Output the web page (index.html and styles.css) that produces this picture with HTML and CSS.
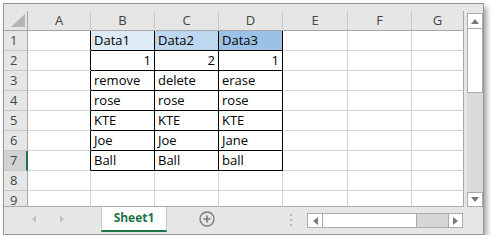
FILE: index.html
```html
<!DOCTYPE html>
<html lang="en">
<head>
    <meta charset="UTF-8">
    <title>Sheet1</title>
    <link rel="stylesheet" href="styles.css">
</head>
<body>
    <div class="window">
        <div class="sheet-area">
            <div class="grid">
                <div class="h corner">
                    <svg width="14" height="13" viewBox="0 0 14 13"><polygon points="14,0 14,13 0,13" fill="#b5b5b5"/></svg>
                </div>
                <div class="h col">A</div><div class="h col">B</div><div class="h col">C</div><div class="h col">D</div><div class="h col">E</div><div class="h col">F</div><div class="h col last">G</div>

                <div class="h row">1</div><div class="c edge"></div><div class="c t b1">Data1</div><div class="c t b2">Data2</div><div class="c t b3">Data3</div><div class="c"></div><div class="c"></div><div class="c last"></div>
                <div class="h row">2</div><div class="c edge"></div><div class="c t num">1</div><div class="c t num">2</div><div class="c t num">1</div><div class="c"></div><div class="c"></div><div class="c last"></div>
                <div class="h row">3</div><div class="c edge"></div><div class="c t">remove</div><div class="c t">delete</div><div class="c t">erase</div><div class="c"></div><div class="c"></div><div class="c last"></div>
                <div class="h row">4</div><div class="c edge"></div><div class="c t">rose</div><div class="c t">rose</div><div class="c t">rose</div><div class="c"></div><div class="c"></div><div class="c last"></div>
                <div class="h row">5</div><div class="c edge"></div><div class="c t">KTE</div><div class="c t">KTE</div><div class="c t">KTE</div><div class="c"></div><div class="c"></div><div class="c last"></div>
                <div class="h row">6</div><div class="c edge"></div><div class="c t">Joe</div><div class="c t">Joe</div><div class="c t">Jane</div><div class="c"></div><div class="c"></div><div class="c last"></div>
                <div class="h row active">7</div><div class="c edge"></div><div class="c t">Ball</div><div class="c t">Ball</div><div class="c t">ball</div><div class="c"></div><div class="c"></div><div class="c last"></div>
                <div class="h row">8</div><div class="c"></div><div class="c"></div><div class="c"></div><div class="c"></div><div class="c"></div><div class="c"></div><div class="c last"></div>
                <div class="h row">9</div><div class="c"></div><div class="c"></div><div class="c"></div><div class="c"></div><div class="c"></div><div class="c"></div><div class="c last"></div>
            </div>
            <div class="vscroll">
                <div class="sbtn up"><svg width="8" height="5" viewBox="0 0 8 5"><polygon points="0,5 8,5 4,0" fill="#7a7a7a"/></svg></div>
                <div class="vthumb"></div>
                <div class="vtrack"></div>
                <div class="sbtn down"><svg width="8" height="5" viewBox="0 0 8 5"><polygon points="0,0 8,0 4,5" fill="#7a7a7a"/></svg></div>
            </div>
        </div>
        <div class="tabbar">
            <div class="tab-nav">
                <svg width="97" height="25" viewBox="0 0 97 25">
                    <polygon points="28,12 32,8 32,16" fill="#c3c3c3"/>
                    <polygon points="56,8 60,12 56,16" fill="#c3c3c3"/>
                </svg>
            </div>
            <div class="sheet-tab">Sheet1</div>
            <svg class="add-sheet" width="16" height="16" viewBox="0 0 16 16">
                <circle cx="8" cy="8" r="7" fill="none" stroke="#7a7a7a" stroke-width="1.3"/>
                <path d="M4.5 8h7M8 4.5v7" stroke="#7a7a7a" stroke-width="1.5"/>
            </svg>
            <div class="split-dots"><span></span><span></span><span></span></div>
            <div class="hscroll">
                <div class="hbtn"><svg width="5" height="8" viewBox="0 0 5 8"><polygon points="5,0 5,8 0,4" fill="#7a7a7a"/></svg></div>
                <div class="hthumb"></div>
                <div class="htrack"></div>
                <div class="hbtn right"><svg width="5" height="8" viewBox="0 0 5 8"><polygon points="0,0 0,8 5,4" fill="#7a7a7a"/></svg></div>
            </div>
        </div>
    </div>
</body>
</html>
```

FILE: styles.css
```css
* {
    box-sizing: border-box;
}

body {
    margin: 0;
    background-color: #fff;
    font-family: "Open Sans", Arial, sans-serif;
}

.window {
    margin: 3px 0 0 3px;
    width: 481px;
    height: 232px;
    border: 1px solid #959595;
    background-color: #e6e6e6;
    box-shadow: 3px 4px 5px rgba(0, 0, 0, 0.35);
    display: flex;
    flex-direction: column;
}

.sheet-area {
    display: flex;
    padding-top: 7px;
    height: 203px;
}

.grid {
    display: grid;
    grid-template-columns: 24px 63px 64px 64px 64px 65px 64px 52px;
    grid-auto-rows: 20px;
    width: 460px;
    height: 196px;
    overflow: hidden;
    border-bottom: 1px solid #ababab;
}

/* headers */
.h {
    background-color: #e6e6e6;
    color: #444;
    font-size: 13px;
    line-height: 19px;
    border-right: 1px solid #c8c8c8;
    border-bottom: 1px solid #c8c8c8;
}

.col {
    text-align: center;
    border-bottom-color: #a6a6a6;
}

.col.last {
    border-right-color: #a6a6a6;
}

.corner {
    border-right-color: #a6a6a6;
    border-bottom-color: #a6a6a6;
    display: flex;
    align-items: flex-end;
    justify-content: flex-end;
    padding: 0 2px 3px 0;
}

.corner svg {
    display: block;
}

.row {
    padding-left: 6px;
    border-right-color: #a6a6a6;
}

.row.active {
    background-color: #d2d2d2;
    border-right: 2px solid #217346;
}

/* cells */
.c {
    background-color: #fff;
    color: #000;
    font-size: 13px;
    line-height: 19px;
    padding: 0 3px;
    white-space: nowrap;
    overflow: hidden;
    border-right: 1px solid #d4d4d4;
    border-bottom: 1px solid #d4d4d4;
}

.c.last {
    border-right-color: #a6a6a6;
}

.c.edge {
    border-right-color: #000;
}

.c.t {
    border-right-color: #000;
    border-bottom-color: #000;
}

.num {
    text-align: right;
}

.b1 { background-color: #ddebf7; }
.b2 { background-color: #bdd7ee; }
.b3 { background-color: #9bc2e6; }

/* vertical scrollbar */
.vscroll {
    margin-left: 3px;
    width: 16px;
    height: 196px;
    padding-top: 2px;
    display: flex;
    flex-direction: column;
}

.sbtn {
    background-color: #fff;
    border: 1px solid #ababab;
    display: flex;
    align-items: center;
    justify-content: center;
}

.sbtn.up {
    height: 16px;
}

.sbtn.down {
    height: 15px;
}

.vthumb {
    height: 64px;
    background-color: #fff;
    border: 1px solid #ababab;
    border-top: none;
}

.vtrack {
    flex: 1;
    background-color: #dadada;
}

/* sheet tabs */
.tabbar {
    display: flex;
    align-items: flex-start;
    height: 27px;
}

.tab-nav {
    width: 97px;
    height: 25px;
}

.tab-nav svg {
    display: block;
}

.sheet-tab {
    width: 66px;
    height: 25px;
    background-color: #fff;
    border-left: 1px solid #c6c6c6;
    border-right: 1px solid #c6c6c6;
    border-bottom: 2px solid #217346;
    color: #217346;
    font-size: 12px;
    font-weight: bold;
    line-height: 22px;
    text-align: center;
}

.add-sheet {
    display: block;
    margin: 4px 0 0 32px;
}

.split-dots {
    margin: 7px 0 0 75px;
    display: flex;
    flex-direction: column;
    gap: 3px;
}

.split-dots span {
    width: 2px;
    height: 2px;
    background-color: #b4b4b4;
}

.hscroll {
    margin: 6px 0 0 15px;
    width: 156px;
    height: 15px;
    display: flex;
    border: 1px solid #ababab;
    background-color: #d6d6d6;
}

.hbtn {
    width: 15px;
    background-color: #fff;
    border-right: 1px solid #ababab;
    display: flex;
    align-items: center;
    justify-content: center;
}

.hbtn.right {
    width: 14px;
    border-right: none;
    border-left: 1px solid #ababab;
}

.hthumb {
    width: 94px;
    background-color: #fff;
    border-right: 1px solid #ababab;
}

.htrack {
    flex: 1;
}
```
